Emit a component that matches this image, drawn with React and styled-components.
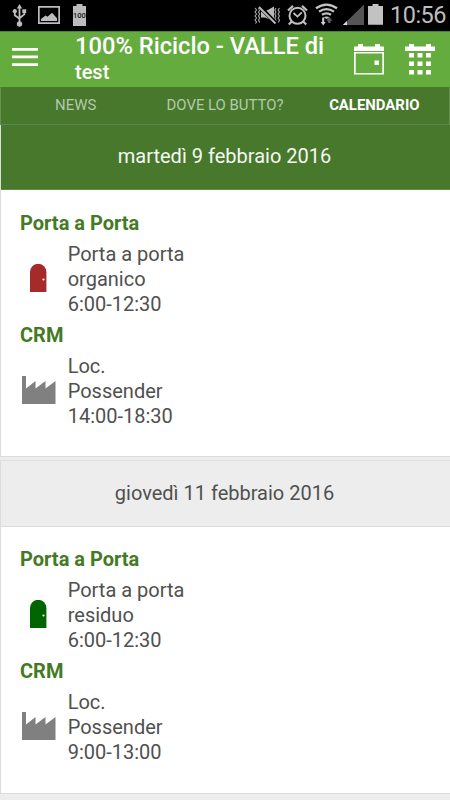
import React from 'react';
import styled, { createGlobalStyle } from 'styled-components';

const GlobalStyle = createGlobalStyle`
	* {
		box-sizing: border-box;
	}
	body {
		margin: 0;
		background: #fff;
		font-family: Roboto, sans-serif;
		overflow: hidden;
	}
	svg {
		display: block;
		flex: none;
	}
`;

const Screen = styled.div`
	width: 450px;
	height: 800px;
	overflow: hidden;
	background: #ededed;
`;

const StatusBar = styled.div`
	height: 31px;
	display: flex;
	justify-content: space-between;
	background: #000;
`;

const Clock = styled.span`
	width: 60px;
	font-size: 23.5px;
	line-height: 31px;
	letter-spacing: -0.5px;
	color: #bebebe;
	white-space: nowrap;
`;

const StatusRight = styled.div`
	display: flex;
`;

const HeaderStyled = styled.header`
	height: 56px;
	display: flex;
	padding-left: 12px;
	background: #64ac3e;
	border-top: 1px solid #4a8a2c;
`;

const MenuButton = styled.div`
	width: 63px;
	padding-top: 16px;
`;

const Titles = styled.div`
	width: 265px;
	color: #fff;
	font-weight: 500;
	white-space: nowrap;
`;

const Title = styled.div`
	height: 28px;
	font-size: 23.7px;
	line-height: 29px;
`;

const Subtitle = styled.div`
	font-size: 20px;
	line-height: 25px;
`;

const Actions = styled.div`
	display: flex;
	gap: 21px;
	padding: 12px 0 0 14px;
`;

const Tabs = styled.nav`
	height: 38px;
	display: grid;
	grid-template-columns: repeat(3, 1fr);
	background: #47782c;
	border: 1px solid #66914f;
	border-top-color: #497d2e;
	border-bottom-color: #5b8658;
`;

const Tab = styled.div`
	font-size: 14.9px;
	line-height: 35px;
	text-align: center;
	white-space: nowrap;
	font-weight: ${({ $active }) => ($active ? 700 : 400)};
	color: ${({ $active }) => ($active ? '#fff' : '#b5c9ab')};
`;

const Card = styled.section`
	height: 332px;
	margin-bottom: 3px;
	border: 1px solid #dcdcdc;
	border-top: 0;
	border-right: 0;
	background: #fff;

	& + & {
		height: 334px;
	}
`;

const DateBar = styled.h2`
	height: ${({ $active }) => ($active ? '65px' : '67px')};
	margin: 0;
	padding-right: 2px;
	border-top: ${({ $active }) => ($active ? 0 : '1px solid #e0e0e0')};
	border-bottom: ${({ $active }) => ($active ? '1px solid #638d4c' : '1px solid #dcdcdc')};
	background: ${({ $active }) => ($active ? '#47782c' : '#ededed')};
	color: ${({ $active }) => ($active ? '#f4f8f2' : '#505050')};
	font-size: 20px;
	font-weight: 400;
	line-height: ${({ $active }) => ($active ? '63px' : '64px')};
	text-align: center;
`;

const CardBody = styled.div`
	padding: ${({ $active }) => ($active ? '20.5px' : '19.5px')} 0 0 19px;
`;

const Group = styled.div`
	height: 112.5px;
`;

const GroupTitle = styled.h3`
	margin: 0 0 6px;
	font-size: 20px;
	font-weight: 700;
	line-height: 25px;
	color: #447a24;
`;

const Entry = styled.div`
	display: flex;
	align-items: center;
`;

const EntryIcon = styled.div`
	width: 47.7px;
	padding-bottom: 3px;
`;

const EntryText = styled.div`
	font-size: 20px;
	line-height: 25px;
	color: #505050;
	white-space: nowrap;
`;

const LeftStatusIcons = () => (
	<svg width='92' height='31' viewBox='0 0 92 31' fill='#bcbcbc'>
		{/* usb */}
		<g fill='none' stroke='#bcbcbc' strokeWidth='1.8'>
			<path d='M19.5 7v16M14.8 12v3.200l4.700 3.600M24.300 12v2.400l-4.800 3.800' />
		</g>
		<path d='M19.500 4l2.700 4.500h-5.400zM22.300 9.200h3.900v3.900h-3.900z' />
		<circle cx='14.800' cy='11.200' r='2.100' />
		<circle cx='19.500' cy='24' r='2.700' />
		{/* picture */}
		<path fillRule='evenodd' d='M38 6h22v18H38zM39.700 7.700v14.600h18.600V7.700z' />
		<path d='M41 21v-2l4.500-3.400 2 1.200 4.500-4 5 5.500V21z' />
		{/* battery */}
		<path d='M76.500 4h6v2H86v20H73V6h3.500z' />
		<text x='79.500' y='18.400' fill='#111' fontFamily='Roboto, sans-serif' fontSize='7.500' fontWeight='500' textAnchor='middle'>100</text>
	</svg>
);

const RightStatusIcons = () => (
	<svg width='137' height='31' viewBox='253 0 137 31'>
		{/* vibrate / mute */}
		<path d='M255 8l1.6 2-1.6 2 1.6 2-1.6 2 1.6 2-1.6 2 1.6 2-1.2 1.5M258.5 8l1.2 2-1.2 2 1.2 2-1.2 2 1.2 2-1.2 2 1.2 2.5M276 8l-1.2 2 1.2 2-1.2 2 1.2 2-1.2 2 1.2 2-1.2 2.5M279.5 8l-1.4 2 1.4 2-1.4 2 1.4 2-1.4 2 1.4 2-1.2 2.5' fill='none' stroke='#aaa' strokeWidth='1.1' />
		<path d='M261 11.500h4l9-5v15l-9-4h-4z' fill='#b8b8b8' />
		<path d='M260.500 7.500l15 15.500' stroke='#000' strokeWidth='4' />
		<path d='M259 7l16.500 16.500' stroke='#b8b8b8' strokeWidth='2' />
		{/* alarm */}
		<g fill='none' stroke='#c0c0c0'>
			<circle cx='297.500' cy='15.800' r='8' strokeWidth='2' />
			<path d='M288 10.500l5-4.600M307 10.500l-5-4.600M291.800 21.500l-3 3M303.200 21.500l3 3' strokeWidth='2.200' />
			<path d='M293.500 13l4 3.600 4.300-4.300' strokeWidth='1.800' />
		</g>
		{/* wifi */}
		<g fill='none' stroke='#c4c4c4' strokeWidth='2.300'>
			<path d='M316 8.300q10.500-7.500 21 0M319 11.600q7.500-5 15 0M322 14.800q4.500-2.800 9 0' />
		</g>
		<path d='M323.500 17.300q3-1.500 6 0L326.500 19z' fill='#c4c4c4' />
		<path d='M322.200 17.500h2v4.500h1.500l-2.500 3.500-2.500-3.500h1.500z' fill='#d0d0d0' />
		<path d='M329.300 17l3 3.800h-1.900v2.200h-2.300v-2.200h-1.900z' fill='#606060' />
		{/* signal */}
		<path d='M364 4.500V25h-21z' fill='#555' />
		<path d='M347 21v4h-4.200z' fill='#ddd' />
		{/* battery */}
		<path d='M372.500 4h6v2h4.500v18.800h-15V6h4.500z' fill='#c2c2c2' />
	</svg>
);

const MenuIcon = () => (
	<svg width='26' height='18' viewBox='0 0 26 18' fill='#fff'>
		<path d='M0 0h26v2.700H0zM0 7.600h26v2.700H0zM0 15.200h26v2.700H0z' />
	</svg>
);

const DayIcon = () => (
	<svg width='30' height='31' viewBox='0 0 30 31' fill='#fff'>
		<path d='M4 0h5v2.500h12V0h5v2.500h4V7H0V2.500h4z' />
		<path fillRule='evenodd' d='M0 8h30v22.500H0zM1.700 9.500V29h26.600V9.500z' />
		<path d='M20.500 16.500h4.500V21h-4.500z' />
	</svg>
);

const MonthIcon = () => (
	<svg width='30' height='31' viewBox='0 0 30 31' fill='#fff'>
		<path d='M4 0h5v2.500h12V0h5v2.500h4V7H0V2.500h4z' />
		{[9, 17.5, 26].map((y) =>
			[4, 12.5, 21].map((x) => <rect key={`${x}-${y}`} x={x} y={y} width='5' height='4.500' />)
		)}
	</svg>
);

const DoorIcon = ({ color }) => (
	<svg width='36' height='28' viewBox='0 0 36 28'>
		<path d='M10 28V8a8.200 8.200 0 0 1 16.400 0v20z' fill={color} />
		<circle cx='23.500' cy='15.500' r='1.100' fill='#fff' />
	</svg>
);

const FactoryIcon = () => (
	<svg width='36' height='28' viewBox='0 0 36 28'>
		<path d='M2 28V0h4v12.500L15.500 5v7.500L25.500 5v7.500L35.500 5v23z' fill='#808080' />
	</svg>
);

const days = [
	{
		date: 'martedì 9 febbraio 2016',
		active: true,
		groups: [
			{ title: 'Porta a Porta', door: '#a52a2a', lines: ['Porta a porta', 'organico', '6:00-12:30'] },
			{ title: 'CRM', lines: ['Loc.', 'Possender', '14:00-18:30'] },
		],
	},
	{
		date: 'giovedì 11 febbraio 2016',
		groups: [
			{ title: 'Porta a Porta', door: '#006400', lines: ['Porta a porta', 'residuo', '6:00-12:30'] },
			{ title: 'CRM', lines: ['Loc.', 'Possender', '9:00-13:00'] },
		],
	},
];

const Day = ({ day }) => (
	<Card>
		<DateBar $active={day.active}>{day.date}</DateBar>
		<CardBody $active={day.active}>
			{day.groups.map((group) => (
				<Group key={group.title}>
					<GroupTitle>{group.title}</GroupTitle>
					<Entry>
						<EntryIcon>{group.door ? <DoorIcon color={group.door} /> : <FactoryIcon />}</EntryIcon>
						<EntryText>
							{group.lines.map((line) => (
								<div key={line}>{line}</div>
							))}
						</EntryText>
					</Entry>
				</Group>
			))}
		</CardBody>
	</Card>
);

const App = () => {
	return (
		<Screen>
			<GlobalStyle />
			<StatusBar>
				<LeftStatusIcons />
				<StatusRight>
					<RightStatusIcons />
					<Clock>10:56</Clock>
				</StatusRight>
			</StatusBar>
			<HeaderStyled>
				<MenuButton>
					<MenuIcon />
				</MenuButton>
				<Titles>
					<Title>100% Riciclo - VALLE di</Title>
					<Subtitle>test</Subtitle>
				</Titles>
				<Actions>
					<DayIcon />
					<MonthIcon />
				</Actions>
			</HeaderStyled>
			<Tabs>
				<Tab>NEWS</Tab>
				<Tab>DOVE LO BUTTO?</Tab>
				<Tab $active>CALENDARIO</Tab>
			</Tabs>
			{days.map((day) => (
				<Day key={day.date} day={day} />
			))}
		</Screen>
	);
};

export default App;
